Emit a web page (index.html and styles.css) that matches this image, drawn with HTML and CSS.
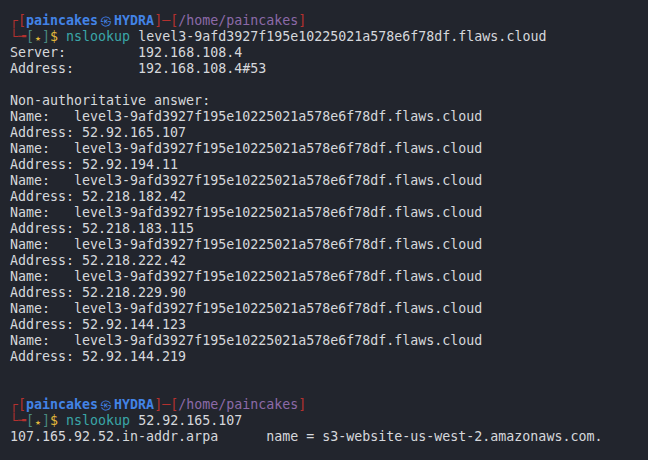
FILE: index.html
```html
<!DOCTYPE html>
<html>
<head>
<meta charset="utf-8">
<link rel="stylesheet" href="styles.css">
</head>
<body>
<pre class="term"><span class="r">┌</span><span class="r">[</span><span class="u">paincakes</span><span class="at">㉿</span><span class="u">HYDRA</span><span class="r">]─[</span><span class="p">/home/paincakes</span><span class="r">]</span>
<span class="r">└╼</span><span class="g">[</span><span class="y star">★</span><span class="g">]</span><span class="y">$</span> <span class="c">nslookup</span> level3-9afd3927f195e10225021a578e6f78df.flaws.cloud
Server:		192.168.108.4
Address:	192.168.108.4#53

Non-authoritative answer:
Name:	level3-9afd3927f195e10225021a578e6f78df.flaws.cloud
Address: 52.92.165.107
Name:	level3-9afd3927f195e10225021a578e6f78df.flaws.cloud
Address: 52.92.194.11
Name:	level3-9afd3927f195e10225021a578e6f78df.flaws.cloud
Address: 52.218.182.42
Name:	level3-9afd3927f195e10225021a578e6f78df.flaws.cloud
Address: 52.218.183.115
Name:	level3-9afd3927f195e10225021a578e6f78df.flaws.cloud
Address: 52.218.222.42
Name:	level3-9afd3927f195e10225021a578e6f78df.flaws.cloud
Address: 52.218.229.90
Name:	level3-9afd3927f195e10225021a578e6f78df.flaws.cloud
Address: 52.92.144.123
Name:	level3-9afd3927f195e10225021a578e6f78df.flaws.cloud
Address: 52.92.144.219


<span class="r">┌</span><span class="r">[</span><span class="u">paincakes</span><span class="at">㉿</span><span class="u">HYDRA</span><span class="r">]─[</span><span class="p">/home/paincakes</span><span class="r">]</span>
<span class="r">└╼</span><span class="g">[</span><span class="y star">★</span><span class="g">]</span><span class="y">$</span> <span class="c">nslookup</span> 52.92.165.107
107.165.92.52.in-addr.arpa	name = s3-website-us-west-2.amazonaws.com.
</pre>
</body>
</html>
```
FILE: styles.css
```css
html, body {
  margin: 0;
  padding: 0;
  background: #22252d;
  height: 100%;
}
.term {
  margin: 0;
  padding: 13px 10px 0 10px;
  font-family: "DejaVu Sans Mono", "Liberation Mono", monospace;
  font-size: 13.3px;
  line-height: 16px;
  color: #d6d8dc;
  tab-size: 8;
  white-space: pre;
}
.r { color: #b3312f; }
.u { color: #4283e6; font-weight: bold; }
.at {
  color: #4283e6;
  display: inline-block;
  width: 16px;
  line-height: 12px;
  text-align: center;
  font-size: 12px;
}
.p { color: #8c6aa8; }
.g { color: #4a8a80; }
.y { color: #e2b93b; }
.star { display: inline-block; width: 8px; line-height: 12px; text-align: center; font-size: 9px; }
.c { color: #3aa6a8; }
```
